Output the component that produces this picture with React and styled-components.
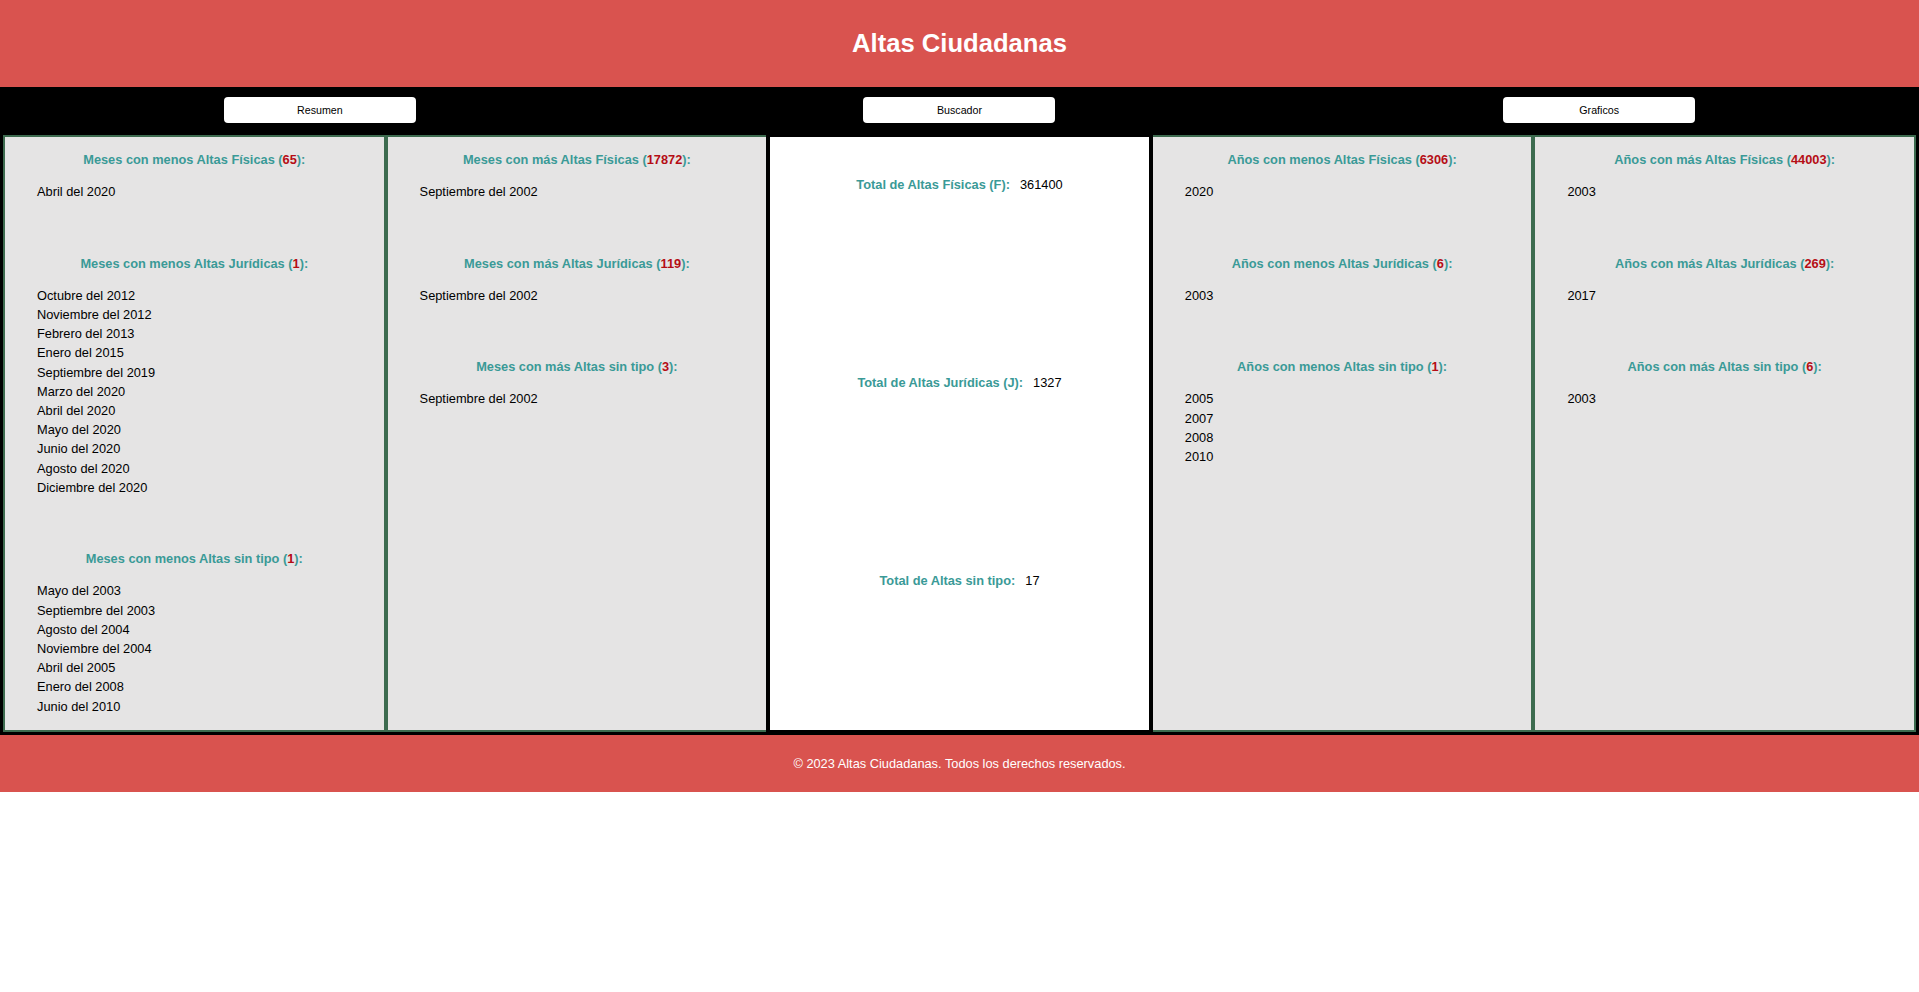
import React from 'react'
import styled, { createGlobalStyle } from 'styled-components'

const GlobalStyle = createGlobalStyle`
    body {
        margin: 0;
        font-family: "Liberation Sans", Arial, sans-serif;
        font-size: 12.8px;
        color: #000;
        background: #fff;
    }
`

const Header = styled.header`
    height: 87px;
    background: #d9534f;
    display: flex;
    align-items: center;
    justify-content: center;
`
const Title = styled.h1`
    margin: 0;
    color: #fff;
    font-size: 25.6px;
    font-weight: 700;
`

const Main = styled.main`
    background: #000;
`
const Nav = styled.nav`
    height: 48px;
    box-sizing: border-box;
    padding-top: 10px;
    display: grid;
    grid-template-columns: repeat(3, 1fr);
    align-items: start;
    justify-items: center;
`
const NavButton = styled.button`
    width: 192px;
    height: 26px;
    border: none;
    border-radius: 4px;
    background: #fff;
    color: #000;
    font-family: "Liberation Sans", Arial, sans-serif;
    font-size: 10.67px;
    cursor: pointer;
`

const Grid = styled.div`
    display: grid;
    grid-template-columns: repeat(5, 1fr);
    padding: 0 3px 3px;
`
const Panel = styled.div`
    background: #e5e4e4;
    border: 2px solid #3d6b4f;
    padding: 15px 0 14.4px;
`
const TotalsPanel = styled.div`
    position: relative;
    z-index: 1;
    margin: -2px;
    background: #fff;
    border: 4px solid #000;
    padding-top: 40.4px;
    display: flex;
    flex-direction: column;
    gap: 181.9px;
`

const Section = styled.section`
    & + & {
        margin-top: 54.2px;
    }
`
const Heading = styled.h4`
    margin: 0 0 14.2px;
    line-height: 16px;
    font-size: 12.8px;
    font-weight: 700;
    color: #3a9a97;
    text-align: center;
`
const Count = styled.span`
    color: #b50d15;
`
const List = styled.ul`
    list-style: none;
    margin: 0;
    padding: 0 0 0 32px;
`
const Item = styled.li`
    line-height: 19.2px;
`

const TotalRow = styled.div`
    display: flex;
    justify-content: center;
    align-items: center;
    line-height: 16px;
`
const TotalLabel = styled.span`
    font-weight: 700;
    color: #3a9a97;
`
const TotalValue = styled.span`
    margin-left: 10px;
`

const Footer = styled.footer`
    height: 57px;
    background: #d9534f;
    color: #fff;
    display: flex;
    align-items: center;
    justify-content: center;
`

const columns = [
    [
        { title: 'Meses con menos Altas Físicas', count: 65, items: ['Abril del 2020'] },
        {
            title: 'Meses con menos Altas Jurídicas', count: 1,
            items: ['Octubre del 2012', 'Noviembre del 2012', 'Febrero del 2013', 'Enero del 2015', 'Septiembre del 2019', 'Marzo del 2020', 'Abril del 2020', 'Mayo del 2020', 'Junio del 2020', 'Agosto del 2020', 'Diciembre del 2020']
        },
        {
            title: 'Meses con menos Altas sin tipo', count: 1,
            items: ['Mayo del 2003', 'Septiembre del 2003', 'Agosto del 2004', 'Noviembre del 2004', 'Abril del 2005', 'Enero del 2008', 'Junio del 2010']
        },
    ],
    [
        { title: 'Meses con más Altas Físicas', count: 17872, items: ['Septiembre del 2002'] },
        { title: 'Meses con más Altas Jurídicas', count: 119, items: ['Septiembre del 2002'] },
        { title: 'Meses con más Altas sin tipo', count: 3, items: ['Septiembre del 2002'] },
    ],
    null,
    [
        { title: 'Años con menos Altas Físicas', count: 6306, items: ['2020'] },
        { title: 'Años con menos Altas Jurídicas', count: 6, items: ['2003'] },
        { title: 'Años con menos Altas sin tipo', count: 1, items: ['2005', '2007', '2008', '2010'] },
    ],
    [
        { title: 'Años con más Altas Físicas', count: 44003, items: ['2003'] },
        { title: 'Años con más Altas Jurídicas', count: 269, items: ['2017'] },
        { title: 'Años con más Altas sin tipo', count: 6, items: ['2003'] },
    ],
]

const totals = [
    { label: 'Total de Altas Físicas (F):', value: 361400 },
    { label: 'Total de Altas Jurídicas (J):', value: 1327 },
    { label: 'Total de Altas sin tipo:', value: 17 },
]

const App = () => {
  return (
    <>
      <GlobalStyle />
      <Header>
          <Title>Altas Ciudadanas</Title>
      </Header>
      <Main>
          <Nav>
              <NavButton>Resumen</NavButton>
              <NavButton>Buscador</NavButton>
              <NavButton>Graficos</NavButton>
          </Nav>
          <Grid>
              {columns.map((sections, i) =>
                  sections ? (
                      <Panel key={i}>
                          {sections.map(s => (
                              <Section key={s.title}>
                                  <Heading>{s.title} (<Count>{s.count}</Count>):</Heading>
                                  <List>
                                      {s.items.map((it, j) => <Item key={j}>{it}</Item>)}
                                  </List>
                              </Section>
                          ))}
                      </Panel>
                  ) : (
                      <TotalsPanel key={i}>
                          {totals.map(t => (
                              <TotalRow key={t.label}>
                                  <TotalLabel>{t.label}</TotalLabel>
                                  <TotalValue>{t.value}</TotalValue>
                              </TotalRow>
                          ))}
                      </TotalsPanel>
                  )
              )}
          </Grid>
      </Main>
      <Footer>© 2023 Altas Ciudadanas. Todos los derechos reservados.</Footer>
    </>
  )
}

export default App
